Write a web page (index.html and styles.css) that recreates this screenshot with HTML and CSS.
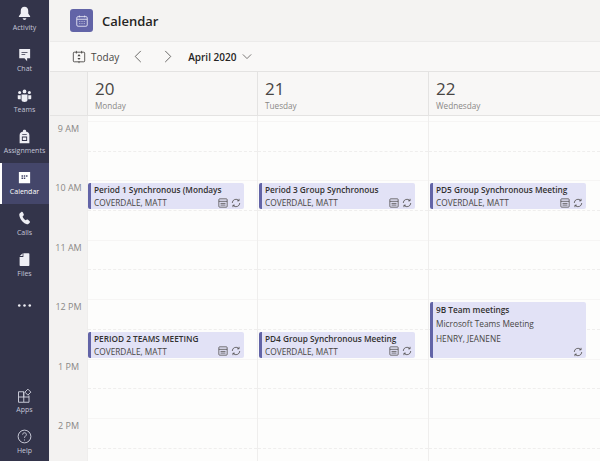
FILE: index.html
```html
<!DOCTYPE html>
<html lang="en">
<head>
    <meta charset="UTF-8">
    <title>Calendar</title>
    <link rel="stylesheet" href="styles.css">
</head>
<body>
    <div class="app">
        <!-- Left rail -->
        <nav class="rail">
            <a class="rail-item">
                <svg viewBox="0 0 20 20"><path d="M10 1c-3.300 0-5 2.500-5 5.500v3.500l-2.500 3.500v1h15v-1l-2.500-3.500v-3.500c0-3-1.700-5.500-5-5.500z"/><path d="M7.500 16.200h5c-.3 1.500-1.300 2.300-2.500 2.300s-2.200-.8-2.500-2.300z"/></svg>
                <span>Activity</span>
            </a>
            <a class="rail-item">
                <svg viewBox="0 0 20 20"><path fill-rule="evenodd" d="M3 2.500h14.500v12.500h-4v4l-3.500-4h-7zM6 6.500v1h8v-1zM6 9.500v1h5v-1z"/></svg>
                <span>Chat</span>
            </a>
            <a class="rail-item">
                <svg viewBox="0 0 20 20"><circle cx="3.500" cy="6" r="2"/><circle cx="10" cy="4.500" r="2.500"/><circle cx="16.500" cy="6" r="2"/><path d="M1 9.500h4v5.500h-2.500c-.9 0-1.500-.7-1.500-1.500zM15 9.500h4v4c0 .8-.6 1.500-1.500 1.500h-2.500zM6 8.500h8v7c0 2-1.800 3-4 3s-4-1-4-3z"/></svg>
                <span>Teams</span>
            </a>
            <a class="rail-item">
                <svg viewBox="0 0 20 20"><path fill-rule="evenodd" d="M8 3.200v-1.200c0-.6.9-1 2-1s2 .4 2 1v1.200c2.800.4 4.500 2.200 4.500 5v10.800h-13v-10.800c0-2.800 1.700-4.600 4.500-5zM6.500 10v6h7v-6zM7.700 11.200h4.600v3.600h-4.600zM7 6.500v1h6v-1z"/></svg>
                <span>Assignments</span>
            </a>
            <a class="rail-item rail-active">
                <svg viewBox="0 0 20 20"><path fill-rule="evenodd" d="M2.500 2.500h15v15h-15zM6 7v2h2v-2zM9 7v2h2v-2zM12 7v2h2v-2zM6 10v2h2v-2zM9 10v2h2v-2z"/></svg>
                <span>Calendar</span>
            </a>
            <a class="rail-item">
                <svg viewBox="0 0 20 20"><path d="M5.500 1.500c1-.6 1.900-.4 2.400.5l1.100 2.300c.3.800.1 1.500-.5 2l-1 .8c.4 2.300 2 4.300 4 5.300l1.200-.8c.7-.4 1.400-.4 2 .1l1.900 1.500c.8.700.9 1.500.3 2.400-1 1.500-2.600 2.500-4.400 1.800-5.300-2-9-7.500-9.500-12.500-.1-1.500 1.300-2.700 2.500-3.400z"/></svg>
                <span>Calls</span>
            </a>
            <a class="rail-item">
                <svg viewBox="0 0 20 20"><path d="M8.500 1.500h7c.6 0 1 .4 1 1v15c0 .6-.4 1-1 1h-11c-.6 0-1-.4-1-1v-11h5z"/><path d="M3.800 5.300l3.700-3.700v3.700z"/></svg>
                <span>Files</span>
            </a>
            <a class="rail-item rail-more">
                <svg viewBox="0 0 20 6"><circle cx="3" cy="3" r="1.700"/><circle cx="10" cy="3" r="1.700"/><circle cx="17" cy="3" r="1.700"/></svg>
            </a>
            <div class="rail-fill"></div>
            <a class="rail-item rail-low">
                <svg class="line" viewBox="0 0 20 20"><path d="M2 5h7v14h-7zM2 12h14v7h-7"/><path d="M16 12v-2M9 5v7"/><path d="M14.500 1.500l4 4-4 4-4-4z"/></svg>
                <span>Apps</span>
            </a>
            <a class="rail-item rail-low">
                <svg class="line" viewBox="0 0 20 20"><circle cx="10" cy="10" r="8.500"/><path d="M7.500 7.500c0-1.500 1.100-2.500 2.500-2.500s2.500 1 2.500 2.400c0 2-2.500 2.100-2.500 4.400"/><path d="M10 14v1.300"/></svg>
                <span>Help</span>
            </a>
        </nav>

        <div class="main">
            <header class="topbar">
                <div class="logo">
                    <svg viewBox="0 0 16 16"><rect x="2" y="3" width="12" height="11" rx="1.500"/><path d="M2 6h12M5 1.800v2M11 1.800v2M5 8.500h1M7.500 8.500h1M10 8.500h1M5 11h1M7.500 11h1M10 11h1"/></svg>
                </div>
                <h1>Calendar</h1>
            </header>

            <div class="toolbar">
                <svg class="today-icon" viewBox="0 0 16 16"><rect x="1.500" y="2.500" width="13" height="11" rx="1"/><path d="M5 1v3M11 1v3M8 13v2"/><path class="today-mark" d="M8 4.500l1.800 2.500h-3.600zM8 11.500l1.800-2.500h-3.600z"/></svg>
                <span class="today">Today</span>
                <svg class="chev chev-prev" viewBox="0 0 10 14"><path d="M8 1l-6 6 6 6"/></svg>
                <svg class="chev chev-next" viewBox="0 0 10 14"><path d="M2 1l6 6-6 6"/></svg>
                <span class="month">April 2020</span>
                <svg class="chev-down" viewBox="0 0 12 8"><path d="M1 1.500l5 5 5-5"/></svg>
            </div>

            <div class="week-head">
                <div class="corner"></div>
                <div class="day-head"><div class="day-num">20</div><div class="day-name">Monday</div></div>
                <div class="day-head"><div class="day-num">21</div><div class="day-name">Tuesday</div></div>
                <div class="day-head"><div class="day-num">22</div><div class="day-name">Wednesday</div></div>
            </div>

            <div class="week-body">
                <div class="times">
                    <div class="time">9 AM</div>
                    <div class="time">10 AM</div>
                    <div class="time">11 AM</div>
                    <div class="time">12 PM</div>
                    <div class="time">1 PM</div>
                    <div class="time">2 PM</div>
                </div>

                <!-- Monday -->
                <div class="day">
                    <div class="slot r1"></div><div class="slot r2 half"></div><div class="slot r3"></div><div class="slot r4 half"></div><div class="slot r5"></div><div class="slot r6 half"></div><div class="slot r7"></div><div class="slot r8 half"></div><div class="slot r9"></div><div class="slot r10 half"></div><div class="slot r11"></div><div class="slot r12 half"></div><div class="slot r13"></div>
                    <div class="event ev-10">
                        <div class="ev-title">Period 1 Synchronous (Mondays</div>
                        <div class="ev-row">
                            <span>COVERDALE, MATT</span>
                            <svg class="ev-icon" viewBox="0 0 12 12"><rect x="1" y="1" width="10" height="10" rx="1"/><path d="M1 4h10M3 6.500h6M3 8.500h6"/></svg>
                            <svg class="ev-icon" viewBox="0 0 12 12"><path d="M10.500 6a4.500 4.500 0 0 1-8 2.800M1.500 6a4.500 4.500 0 0 1 8-2.800M9.700 1v2.400h-2.400M2.300 11v-2.400h2.400"/></svg>
                        </div>
                    </div>
                    <div class="event ev-1230">
                        <div class="ev-title">PERIOD 2 TEAMS MEETING</div>
                        <div class="ev-row">
                            <span>COVERDALE, MATT</span>
                            <svg class="ev-icon" viewBox="0 0 12 12"><rect x="1" y="1" width="10" height="10" rx="1"/><path d="M1 4h10M3 6.500h6M3 8.500h6"/></svg>
                            <svg class="ev-icon" viewBox="0 0 12 12"><path d="M10.500 6a4.500 4.500 0 0 1-8 2.800M1.500 6a4.500 4.500 0 0 1 8-2.800M9.700 1v2.400h-2.400M2.300 11v-2.400h2.400"/></svg>
                        </div>
                    </div>
                </div>

                <!-- Tuesday -->
                <div class="day">
                    <div class="slot r1"></div><div class="slot r2 half"></div><div class="slot r3"></div><div class="slot r4 half"></div><div class="slot r5"></div><div class="slot r6 half"></div><div class="slot r7"></div><div class="slot r8 half"></div><div class="slot r9"></div><div class="slot r10 half"></div><div class="slot r11"></div><div class="slot r12 half"></div><div class="slot r13"></div>
                    <div class="event ev-10">
                        <div class="ev-title">Period 3 Group Synchronous</div>
                        <div class="ev-row">
                            <span>COVERDALE, MATT</span>
                            <svg class="ev-icon" viewBox="0 0 12 12"><rect x="1" y="1" width="10" height="10" rx="1"/><path d="M1 4h10M3 6.500h6M3 8.500h6"/></svg>
                            <svg class="ev-icon" viewBox="0 0 12 12"><path d="M10.500 6a4.500 4.500 0 0 1-8 2.800M1.500 6a4.500 4.500 0 0 1 8-2.800M9.700 1v2.400h-2.400M2.300 11v-2.400h2.400"/></svg>
                        </div>
                    </div>
                    <div class="event ev-1230">
                        <div class="ev-title">PD4 Group Synchronous Meeting</div>
                        <div class="ev-row">
                            <span>COVERDALE, MATT</span>
                            <svg class="ev-icon" viewBox="0 0 12 12"><rect x="1" y="1" width="10" height="10" rx="1"/><path d="M1 4h10M3 6.500h6M3 8.500h6"/></svg>
                            <svg class="ev-icon" viewBox="0 0 12 12"><path d="M10.500 6a4.500 4.500 0 0 1-8 2.800M1.500 6a4.500 4.500 0 0 1 8-2.800M9.700 1v2.400h-2.400M2.300 11v-2.400h2.400"/></svg>
                        </div>
                    </div>
                </div>

                <!-- Wednesday -->
                <div class="day">
                    <div class="slot r1"></div><div class="slot r2 half"></div><div class="slot r3"></div><div class="slot r4 half"></div><div class="slot r5"></div><div class="slot r6 half"></div><div class="slot r7"></div><div class="slot r8 half"></div><div class="slot r9"></div><div class="slot r10 half"></div><div class="slot r11"></div><div class="slot r12 half"></div><div class="slot r13"></div>
                    <div class="event ev-10">
                        <div class="ev-title">PD5 Group Synchronous Meeting</div>
                        <div class="ev-row">
                            <span>COVERDALE, MATT</span>
                            <svg class="ev-icon" viewBox="0 0 12 12"><rect x="1" y="1" width="10" height="10" rx="1"/><path d="M1 4h10M3 6.500h6M3 8.500h6"/></svg>
                            <svg class="ev-icon" viewBox="0 0 12 12"><path d="M10.500 6a4.500 4.500 0 0 1-8 2.800M1.500 6a4.500 4.500 0 0 1 8-2.800M9.700 1v2.400h-2.400M2.300 11v-2.400h2.400"/></svg>
                        </div>
                    </div>
                    <div class="event ev-12">
                        <div class="ev-title">9B Team meetings</div>
                        <div class="ev-line">Microsoft Teams Meeting</div>
                        <div class="ev-line">HENRY, JEANENE</div>
                        <div class="ev-row ev-row-end">
                            <svg class="ev-icon" viewBox="0 0 12 12"><path d="M10.500 6a4.500 4.500 0 0 1-8 2.800M1.500 6a4.500 4.500 0 0 1 8-2.800M9.700 1v2.400h-2.400M2.300 11v-2.400h2.400"/></svg>
                        </div>
                    </div>
                </div>
            </div>
        </div>
    </div>
</body>
</html>
```

FILE: styles.css
```css
html, body {
    margin: 0;
    padding: 0;
    height: 100%;
    overflow: hidden;
}
body {
    font-family: "Open Sans", "Noto Sans", sans-serif;
    color: #252423;
    background-color: #f5f4f3;
}
.app {
    display: flex;
    width: 600px;
    height: 461px;
}

/* Left rail */
.rail {
    width: 49px;
    flex: none;
    display: flex;
    flex-direction: column;
    align-items: stretch;
    background-color: #33344a;
    box-sizing: border-box;
}
.rail-item {
    height: 41px;
    flex: none;
    display: flex;
    flex-direction: column;
    align-items: center;
    justify-content: center;
    gap: 2px;
    padding-bottom: 2px;
    color: #c5c6d8;
    font-size: 7px;
    line-height: 9px;
    box-sizing: border-box;
}
.rail-item:first-child {
    margin-top: -1px;
}
.rail-item svg {
    width: 15px;
    height: 15px;
    fill: #eeeef4;
}
.rail-item svg.line {
    fill: none;
    stroke: #d5d6e2;
    stroke-width: 1.200;
}
.rail-active {
    background-color: #44466a;
    border-left: 2px solid #ffffff;
    padding-right: 2px;
    color: #ffffff;
}
.rail-active svg {
    fill: #ffffff;
}
.rail-more {
    height: 40px;
}
.rail-more svg {
    height: 5px;
}
.rail-low {
    padding: 2px 0 0;
}
.rail-fill {
    flex: 1;
}

/* Header bars */
.main {
    flex: 1;
    display: flex;
    flex-direction: column;
    min-width: 0;
    border-left: 1px solid #f0efee;
}
.topbar {
    height: 42px;
    flex: none;
    display: flex;
    align-items: center;
    padding-left: 20px;
    gap: 9px;
    background-color: #f4f3f2;
    border-bottom: 1px solid #ecebea;
    box-sizing: border-box;
}
.logo {
    width: 23px;
    height: 23px;
    border-radius: 3px;
    background-color: #6264a7;
    display: flex;
    align-items: center;
    justify-content: center;
}
.logo svg {
    width: 14px;
    height: 14px;
    fill: none;
    stroke: #e8e8f5;
    stroke-width: 1;
}
.topbar h1 {
    margin: 0;
    font-size: 13px;
    font-weight: 600;
    color: #252423;
}
.toolbar {
    height: 29px;
    flex: none;
    display: flex;
    align-items: center;
    padding-left: 22px;
    background-color: #f9f8f7;
    border-bottom: 1px solid #e4e3e2;
    box-sizing: content-box;
    font-size: 10px;
    color: #484644;
}
.today-icon {
    width: 14px;
    height: 14px;
    fill: none;
    stroke: #484644;
    stroke-width: 1;
}
.today-mark {
    fill: #484644;
    stroke: none;
}
.today {
    margin-left: 5px;
}
.chev {
    width: 10px;
    height: 13px;
    fill: none;
    stroke: #605e5c;
    stroke-width: 1;
}
.chev-prev {
    margin-left: 14px;
}
.chev-next {
    margin-left: 20px;
}
.month {
    margin-left: 15px;
    font-weight: 600;
    color: #252423;
}
.chev-down {
    width: 10px;
    height: 7px;
    margin-left: 6px;
    fill: none;
    stroke: #605e5c;
    stroke-width: 1;
}

/* Week */
.week-head {
    height: 43px;
    flex: none;
    display: grid;
    grid-template-columns: 37px 170px 171px 1fr;
    background-color: #f8f7f6;
    border-bottom: 1px solid #e4e3e2;
}
.corner {
    background-color: #f3f2f1;
}
.day-head {
    border-left: 1px solid #e4e3e2;
    padding: 6px 0 0 7px;
}
.day-num {
    font-size: 17px;
    line-height: 22px;
    color: #484644;
}
.day-name {
    font-size: 8.200px;
    line-height: 12px;
    color: #8a8886;
}
.week-body {
    flex: 1;
    display: grid;
    grid-template-columns: 37px 170px 171px 1fr;
    min-height: 0;
    border-bottom: 1px dashed #fbe8d8;
}
.times {
    background-color: #f3f2f1;
    padding-top: 6px;
}
.time {
    height: 59.400px;
    text-align: center;
    font-size: 9px;
    line-height: 14px;
    color: #8a8886;
}
.day {
    display: grid;
    grid-template-rows: 6px repeat(12, 29.700px);
    background-color: #fdfdfc;
    border-left: 1px solid #efeeed;
    overflow: hidden;
}
.slot {
    grid-column: 1;
    border-bottom: 1px solid #f6f5f4;
}
.half {
    border-bottom: 1px dashed #efeeed;
}
.r1 { grid-row: 1; }
.r2 { grid-row: 2; }
.r3 { grid-row: 3; }
.r4 { grid-row: 4; }
.r5 { grid-row: 5; }
.r6 { grid-row: 6; }
.r7 { grid-row: 7; }
.r8 { grid-row: 8; }
.r9 { grid-row: 9; }
.r10 { grid-row: 10; }
.r11 { grid-row: 11; }
.r12 { grid-row: 12; }
.r13 { grid-row: 13; }

/* Events */
.event {
    grid-column: 1;
    margin: 2px 13px 2px 0;
    padding: 0 3px 0 3px;
    background-color: #e2e2f6;
    border-left: 3px solid #6264a7;
    border-radius: 2px;
    overflow: hidden;
    font-size: 8.300px;
    line-height: 13px;
    color: #484644;
    display: flex;
    flex-direction: column;
    min-width: 0;
}
.day + .day .event {
    margin-left: 1px;
}
.day:last-child .event {
    margin-right: 14px;
}
.ev-10 { grid-row: 4 / span 1; }
.ev-1230 { grid-row: 9 / span 1; }
.ev-12 {
    grid-row: 8 / span 2;
    padding-top: 1px;
}
.ev-title {
    font-weight: 600;
    font-size: 8.250px;
    line-height: 14px;
    color: #323130;
    white-space: nowrap;
    overflow: hidden;
}
.ev-row {
    display: flex;
    align-items: center;
    gap: 3px;
}
.ev-row span {
    flex: 1;
}
.ev-row-end {
    margin-top: auto;
    justify-content: flex-end;
    padding-bottom: 1px;
}
.ev-line {
    line-height: 14.500px;
}
.ev-icon {
    width: 10px;
    height: 10px;
    fill: none;
    stroke: #484644;
    stroke-width: 0.900;
}
```
